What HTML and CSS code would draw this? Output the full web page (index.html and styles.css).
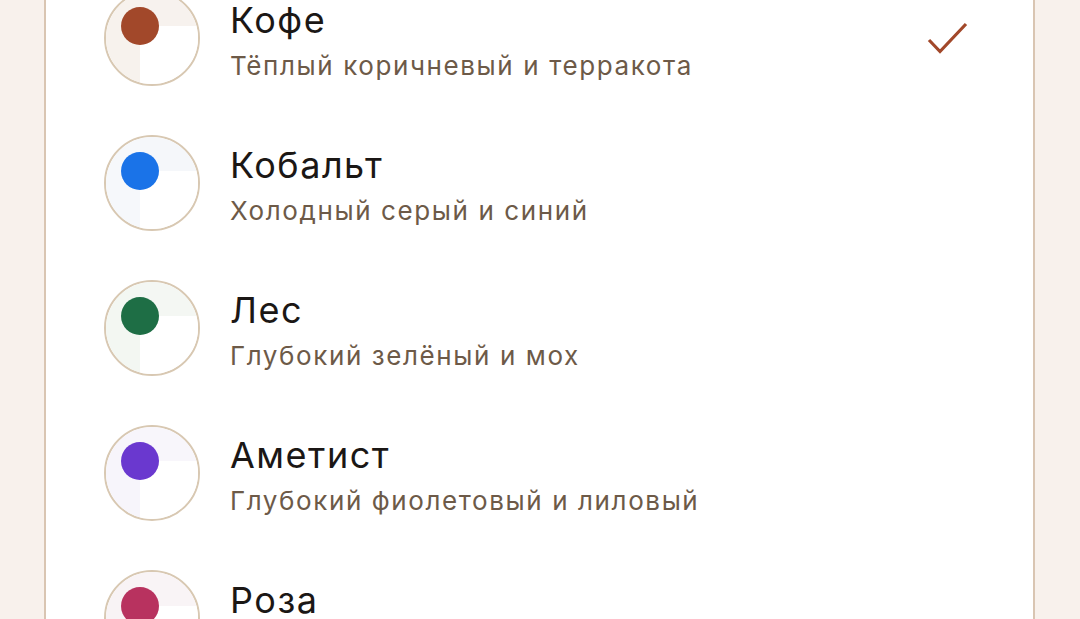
FILE: index.html
```html
<!DOCTYPE html>
<html lang="ru">
<head>
<meta charset="utf-8">
<link rel="stylesheet" href="styles.css">
</head>
<body>
<div class="page">
  <div class="card">
    <div class="row">
      <div class="swatch coffee">
        <div class="q q-tl"></div><div class="q q-tr"></div><div class="q q-bl"></div><div class="q q-br"></div>
        <div class="dot"></div>
      </div>
      <div class="text">
        <div class="title">Кофе</div>
        <div class="sub">Тёплый коричневый и терракота</div>
      </div>
      <svg class="check" viewBox="0 0 48 48" width="48" height="48"><polyline points="5,26 16,37.5 42,10" fill="none" stroke="#a2482a" stroke-width="3.2" stroke-linecap="butt" stroke-linejoin="miter"/></svg>
    </div>
    <div class="row">
      <div class="swatch cobalt">
        <div class="q q-tl"></div><div class="q q-tr"></div><div class="q q-bl"></div><div class="q q-br"></div>
        <div class="dot"></div>
      </div>
      <div class="text">
        <div class="title">Кобальт</div>
        <div class="sub">Холодный серый и синий</div>
      </div>
    </div>
    <div class="row">
      <div class="swatch forest">
        <div class="q q-tl"></div><div class="q q-tr"></div><div class="q q-bl"></div><div class="q q-br"></div>
        <div class="dot"></div>
      </div>
      <div class="text">
        <div class="title">Лес</div>
        <div class="sub">Глубокий зелёный и мох</div>
      </div>
    </div>
    <div class="row">
      <div class="swatch amethyst">
        <div class="q q-tl"></div><div class="q q-tr"></div><div class="q q-bl"></div><div class="q q-br"></div>
        <div class="dot"></div>
      </div>
      <div class="text">
        <div class="title">Аметист</div>
        <div class="sub">Глубокий фиолетовый и лиловый</div>
      </div>
    </div>
    <div class="row">
      <div class="swatch rose">
        <div class="q q-tl"></div><div class="q q-tr"></div><div class="q q-bl"></div><div class="q q-br"></div>
        <div class="dot"></div>
      </div>
      <div class="text">
        <div class="title">Роза</div>
        <div class="sub">Нежный розовый и малиновый</div>
      </div>
    </div>
  </div>
</div>
</body>
</html>
```

FILE: styles.css
```css
html, body {
  margin: 0;
  padding: 0;
  height: 100%;
  overflow: hidden;
  background: #f8f1ec;
  font-family: Inter, "Noto Sans", sans-serif;
}
.page {
  padding: 0 45px 0 44px;
}
.card {
  margin-top: -35px;
  background: #ffffff;
  border-left: 2px solid #d9c5b2;
  border-right: 2px solid #d9c5b2;
}
.row {
  height: 145px;
  display: flex;
  align-items: center;
  padding: 0 61px 0 58px;
}
.swatch {
  position: relative;
  width: 96px;
  height: 96px;
  box-sizing: border-box;
  border: 2px solid #d8c8b2;
  border-radius: 50%;
  overflow: hidden;
  display: grid;
  grid-template-columns: 34px 1fr;
  grid-template-rows: 34px 1fr;
  flex: none;
}
.q-br { background: #ffffff; }
.dot {
  position: absolute;
  left: 15px;
  top: 15px;
  width: 38px;
  height: 38px;
  border-radius: 50%;
}
.coffee .q-tl, .coffee .q-bl { background: #f7f2ed; }
.coffee .q-tr { background: #f7f2ee; }
.coffee .dot { background: #a2482a; }
.cobalt .q-tl, .cobalt .q-bl { background: #f6f8fb; }
.cobalt .q-tr { background: #f5f7fa; }
.cobalt .dot { background: #1a73e8; }
.forest .q-tl, .forest .q-bl { background: #f3f7f2; }
.forest .q-tr { background: #f4f7f3; }
.forest .dot { background: #1e6e45; }
.amethyst .q-tl, .amethyst .q-bl { background: #f7f5fb; }
.amethyst .q-tr { background: #f8f6fb; }
.amethyst .dot { background: #6a38cf; }
.rose .q-tl, .rose .q-bl { background: #f8f3f5; }
.rose .q-tr { background: #f9f4f6; }
.rose .dot { background: #b8325f; }
.text {
  margin-left: 30px;
  display: flex;
  flex-direction: column;
  gap: 9px;
  flex: 1;
  padding-top: 6px;
}
.title {
  font-size: 36px;
  line-height: 42px;
  letter-spacing: 1.5px;
  color: #1b1715;
}
.sub {
  font-size: 26px;
  line-height: 32px;
  letter-spacing: 1.6px;
  color: #6d5a48;
}
.check {
  flex: none;
  display: block;
}
```
